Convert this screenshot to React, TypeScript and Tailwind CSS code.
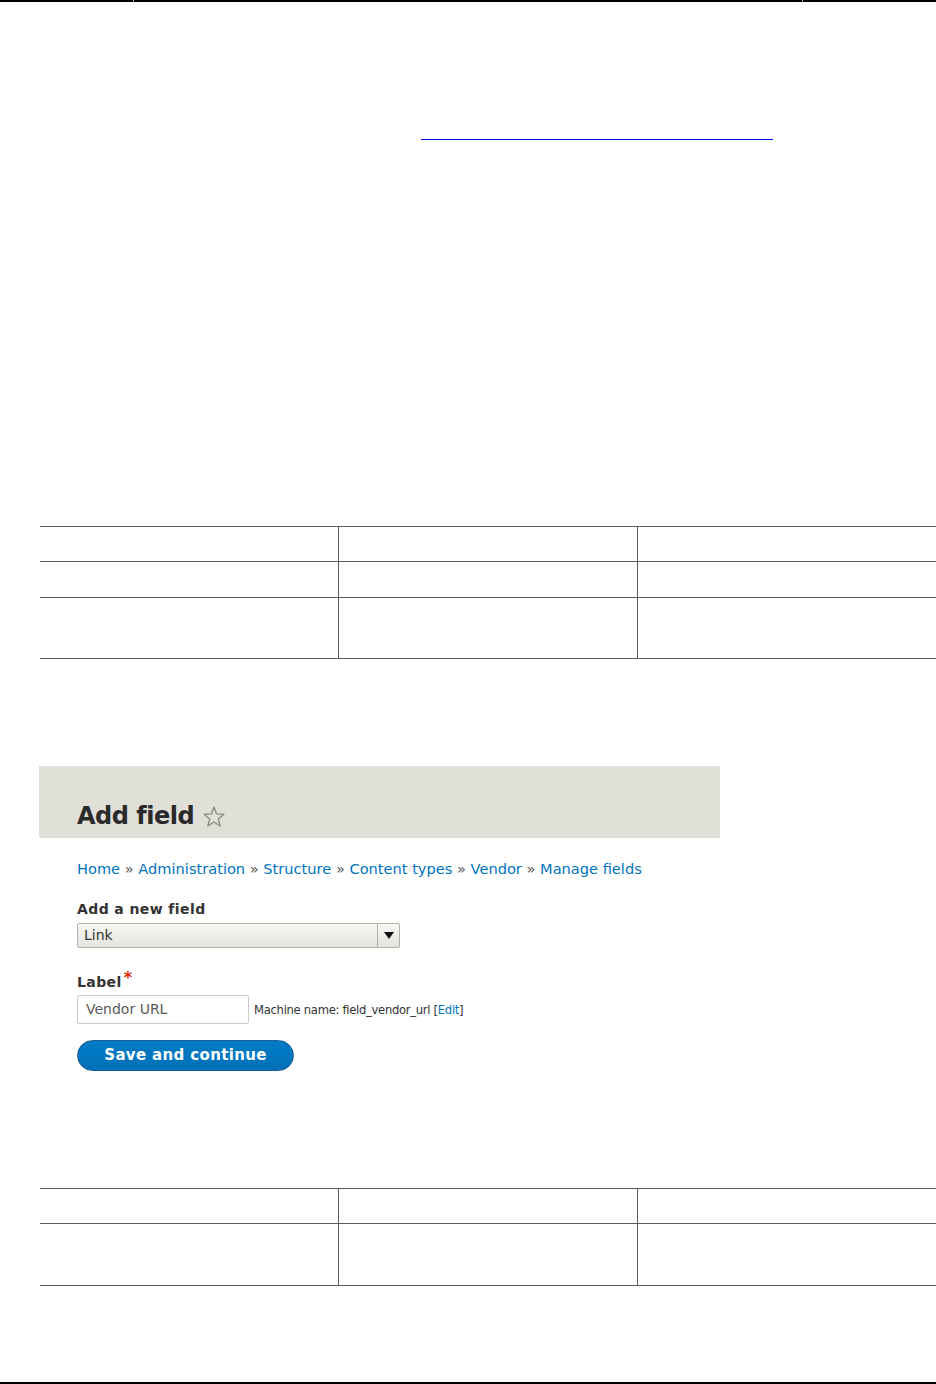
import React from 'react';

const font = { fontFamily: '"DejaVu Sans", "Liberation Sans", sans-serif' };

function EmptyTable({ rows }: { rows: string[] }) {
  return (
    <div className="ml-[40px] border-t border-[#5a5a5a]">
      {rows.map((h, i) => (
        <div key={i} className={`flex border-b border-[#5a5a5a] ${h}`}>
          <div className="w-[298px]" />
          <div className="w-[299px] border-l border-[#5a5a5a]" />
          <div className="flex-1 border-l border-[#5a5a5a]" />
        </div>
      ))}
    </div>
  );
}

function Star() {
  return (
    <svg width="24" height="24" viewBox="0 0 24 24" className="ml-[8px] mb-[3px]">
      <polygon
        points="12,2 14.6,8.9 22,9.3 16.2,13.9 18.2,21 12,17 5.8,21 7.8,13.9 2,9.3 9.4,8.9"
        fill="none"
        stroke="#8a8a82"
        strokeWidth="1.3"
        strokeLinejoin="round"
      />
    </svg>
  );
}

function AddFieldShot() {
  return (
    <div className="ml-[39px] w-[681px]" style={font}>
      <div className="flex h-[72px] items-end bg-[#e0e0d8] pb-[6px] pl-[38px]">
        <h1 className="text-[24px] font-bold leading-[32px] tracking-[-0.5px] text-[#2a2a2a]">Add field</h1>
        <Star />
      </div>
      <div className="pl-[38px] pt-[22px]">
        <div className="text-[14.6px] leading-[18px] text-[#0074bd]">
          Home <span className="text-[#555]">»</span> Administration <span className="text-[#555]">»</span> Structure{' '}
          <span className="text-[#555]">»</span> Content types <span className="text-[#555]">»</span> Vendor{' '}
          <span className="text-[#555]">»</span> Manage fields
        </div>
        <div className="mt-[22px] text-[14px] font-bold leading-[18px] tracking-[0.4px] text-[#333]">Add a new field</div>
        <div className="mt-[5px] flex h-[25px] w-[323px] items-center rounded-[2px] border border-[#b2b2ac] bg-gradient-to-b from-[#f7f7f4] to-[#e4e4df]">
          <span className="flex-1 pl-[6px] text-[14px] text-[#333]">Link</span>
          <span className="flex h-full w-[22px] items-center justify-center border-l border-[#b2b2ac]">
            <svg width="10" height="7" viewBox="0 0 10 7">
              <polygon points="0,0 10,0 5,7" fill="#111" />
            </svg>
          </span>
        </div>
        <div className="mt-[25px] flex items-start text-[14px] font-bold leading-[18px] tracking-[0.4px] text-[#333]">
          Label<span className="ml-[2px] -mt-[4px] text-[16px] text-[#e32700]">*</span>
        </div>
        <div className="mt-[4px] flex items-center">
          <div className="flex h-[29px] w-[172px] items-center rounded-[2px] border border-[#ccc] pl-[8px] text-[14px] text-[#595959]">
            Vendor URL
          </div>
          <span className="ml-[5px] mt-[2px] text-[11.6px] tracking-[-0.3px] text-[#333]">
            Machine name: field_vendor_url [<span className="text-[#0074bd]">Edit</span>]
          </span>
        </div>
        <button className="mt-[16px] flex h-[31px] w-[217px] items-center justify-center rounded-full border border-[#1e5c90] bg-gradient-to-b from-[#007bc6] to-[#0071b8] text-[15px] font-bold tracking-[0.35px] text-white">
          Save and continue
        </button>
      </div>
    </div>
  );
}

export default function App() {
  return (
    <div className="h-[1384px] w-[936px] overflow-hidden bg-white">
      <div className="flex h-[2px]">
        <div className="w-[133px] bg-black" />
        <div className="w-px bg-[#999]" />
        <div className="w-[668px] bg-black" />
        <div className="w-px bg-[#999]" />
        <div className="flex-1 bg-black" />
      </div>
      <div className="ml-[421px] mt-[137px] h-px w-[352px] bg-[#0000ee]" />
      <div className="mt-[386px]">
        <EmptyTable rows={['h-[35px]', 'h-[36px]', 'h-[61px]']} />
      </div>
      <div className="mt-[107px]">
        <AddFieldShot />
      </div>
      <div className="mt-[117px]">
        <EmptyTable rows={['h-[35px]', 'h-[62px]']} />
      </div>
      <div className="mt-[96px] h-[2px] bg-black" />
    </div>
  );
}
